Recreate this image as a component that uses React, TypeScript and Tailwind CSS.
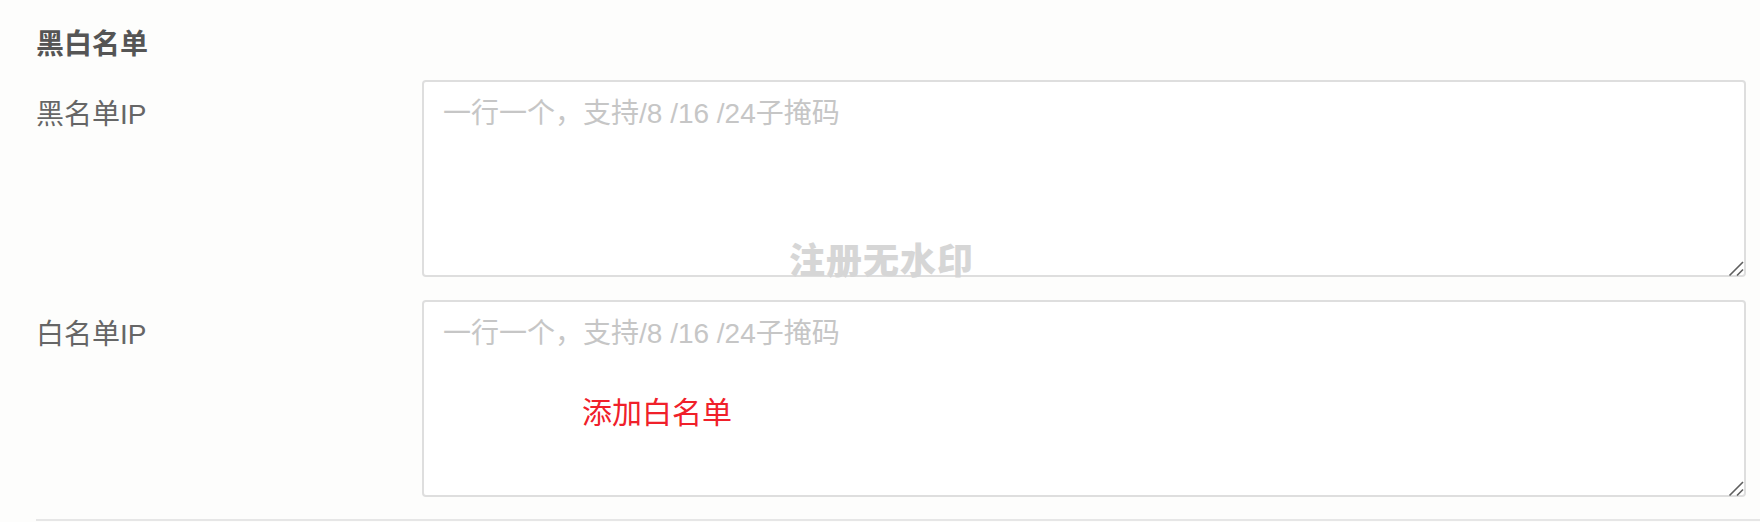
const FONT = "font-['Liberation_Sans','Noto_Sans_CJK_SC',sans-serif]";

const PLACEHOLDER = "一行一个，支持/8 /16 /24子掩码";

function ResizeGrip() {
  return (
    <svg
      width="18"
      height="18"
      viewBox="0 0 18 18"
      className="pointer-events-none absolute bottom-0 right-0"
    >
      <path d="M1.5 16.5L15 3M9 16.5L15 10.5" stroke="#5f5f5f" strokeWidth="1.6" fill="none" />
    </svg>
  );
}

function IpRow({ label, children }: { label: string; children?: React.ReactNode }) {
  return (
    <div className="flex pr-[14px]">
      <label className="w-[386px] shrink-0 pt-[14px] text-[28px] leading-[42px] text-[#666]">
        {label}
      </label>
      <div className="relative flex-1">
        <textarea
          placeholder={PLACEHOLDER}
          className="block h-[197px] w-full resize-none rounded-[4px] border-2 border-[#dedede] bg-white px-[19px] py-[11px] text-[28px] leading-[42px] text-[#333] outline-none placeholder:text-[#c6c6c6]"
        />
        <ResizeGrip />
        {children}
      </div>
    </div>
  );
}

export default function App() {
  return (
    <div className={`relative h-[522px] overflow-hidden bg-[#fdfdfc] ${FONT}`}>
      <div className="pl-[36px] pt-[24px]">
        <h2 className="text-[28px] font-semibold leading-[42px] text-[#555]">黑白名单</h2>

        <div className="mt-[14px] flex flex-col gap-[23px]">
          <IpRow label="黑名单IP" />
          <IpRow label="白名单IP">
            <span className="pointer-events-none absolute left-[160px] top-[90px] text-[30px] leading-[45px] text-[#f0202a]">
              添加白名单
            </span>
          </IpRow>
        </div>

        <div className="mt-[22px] h-[2px] bg-[#e6e6e6]" />
      </div>

      {/* watermark */}
      <span className="pointer-events-none absolute left-[789px] top-[235px] text-[36px] font-black leading-[54px] tracking-[1px] text-[#d6d6d6]">
        注册无水印
      </span>
    </div>
  );
}
